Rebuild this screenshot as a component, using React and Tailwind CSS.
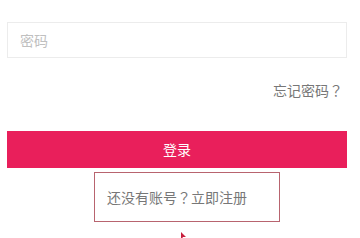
import React from "react";

const Q = () => <span className="font-['Noto_Sans_CJK_TC',sans-serif]">？</span>;

export default function App() {
  return (
    <div className="relative w-[360px] h-[238px] overflow-hidden bg-white font-['Noto_Sans_CJK_SC','Noto_Sans',sans-serif]">
      <div className="pl-[7px] pr-[13px] pt-[22px]">
        {/* password input */}
        <div className="flex h-[36px] items-center border border-[#ececec] pl-[12px] text-[14px] text-[#c0c0c0]">
          密码
        </div>

        {/* forgot password */}
        <div className="mt-[23px] flex justify-end pr-[4px] text-[14px] leading-[18px] text-[#777]">
          <span>
            忘记密码
            <Q />
          </span>
        </div>

        {/* login button */}
        <div className="mt-[32px] flex h-[37px] items-center justify-center bg-[#e91f5b] text-[14px] text-white">
          登录
        </div>

        {/* register link */}
        <div className="ml-[87px] mt-[4px] flex h-[50px] w-[186px] items-center border border-[#b8646f] pl-[12px] text-[14px] text-[#777]">
          <span>
            还没有账号
            <Q />
            立即注册
          </span>
        </div>
      </div>

      {/* cursor */}
      <svg
        className="absolute left-[180px] top-[232px]"
        width="8"
        height="8"
        viewBox="0 0 8 8"
      >
        <path d="M1 0 L6 5 L3 5 L1 8 Z" fill="#c81e3c" />
      </svg>
    </div>
  );
}
